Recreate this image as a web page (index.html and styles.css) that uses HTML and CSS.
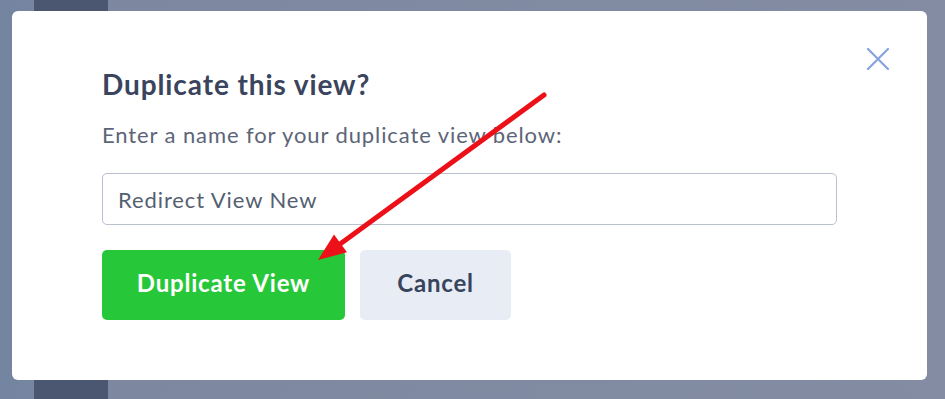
FILE: index.html
```html
<!DOCTYPE html>
<html>
<head>
<meta charset="utf-8">
<link rel="stylesheet" href="styles.css">
</head>
<body>
<div class="modal">
  <button class="close" aria-label="Close">
    <svg width="24" height="22" viewBox="0 0 24 22"><path d="M2 1 L22 21 M22 1 L2 21" stroke="#86a3df" stroke-width="2.2" stroke-linecap="round" fill="none"/></svg>
  </button>
  <h2 class="title">Duplicate this view?</h2>
  <p class="subtitle">Enter a name for your duplicate view below:</p>
  <div class="input">Redirect View New</div>
  <div class="actions">
    <button class="btn btn-primary">Duplicate View</button>
    <button class="btn btn-secondary">Cancel</button>
  </div>
</div>
<svg class="arrow" width="945" height="399" viewBox="0 0 945 399">
  <line x1="544" y1="95" x2="336" y2="247" stroke="#ec1018" stroke-width="5" stroke-linecap="round"/>
  <polygon points="318,260 334,234.5 347,252.3" fill="#ec1018"/>
</svg>
</body>
</html>
```

FILE: styles.css
```css
* { box-sizing: border-box; }
html, body { margin: 0; padding: 0; }
body {
  width: 945px;
  height: 399px;
  overflow: hidden;
  position: relative;
  font-family: Lato, "Open Sans", sans-serif;
  letter-spacing: 0.9px;
  background: linear-gradient(to right, #7384a0 0, #7686a1 34px, #4b5670 34px, #4b5670 108px, #7d88a0 108px, #838ca3 100%);
  padding: 11px 18px 0 12px;
}
.modal {
  position: relative;
  width: 915px;
  height: 369px;
  background: #fff;
  border-radius: 6px;
  padding: 56px 90px 0 90px;
}
.close {
  position: absolute;
  top: 37px;
  right: 37px;
  background: none;
  border: 0;
  padding: 0;
  width: 24px;
  height: 22px;
  display: flex;
}
.title {
  margin: 0;
  font-size: 28px;
  line-height: 34px;
  font-weight: 700;
  color: #3a445d;
}
.subtitle {
  margin: 21px 0 0;
  font-size: 22px;
  line-height: 26px;
  color: #5c6578;
}
.input {
  margin-top: 25px;
  width: 735px;
  height: 52px;
  border: 1px solid #b9c1cf;
  border-radius: 5px;
  padding: 0 15px;
  display: flex;
  align-items: center;
  font-size: 22px;
  color: #555f72;
}
.actions {
  display: flex;
  gap: 15px;
  margin-top: 25px;
}
.btn {
  height: 70px;
  border: 0;
  border-radius: 5px;
  font-family: inherit;
  letter-spacing: 0.8px;
  font-size: 24px;
  font-weight: 700;
  padding: 0 0 5px;
}
.btn-primary {
  width: 243px;
  background: #27c73a;
  color: #fff;
}
.btn-secondary {
  width: 151px;
  background: #e8ecf5;
  color: #38435c;
}
.arrow {
  position: absolute;
  left: 0;
  top: 0;
  pointer-events: none;
}
```
